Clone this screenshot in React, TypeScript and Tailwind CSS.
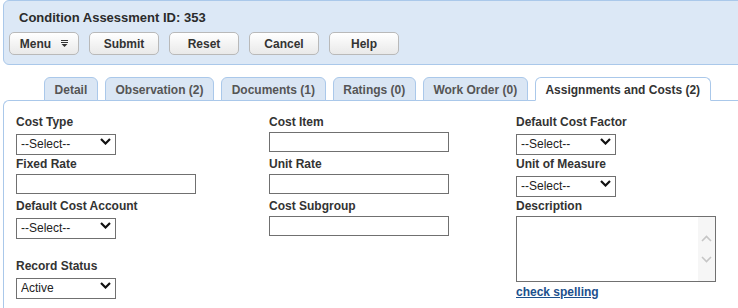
import React from 'react';

const font = "font-['Liberation_Sans',Arial,sans-serif]";

function Chevron() {
  return (
    <svg width="11" height="7" viewBox="0 0 11 7" className="pointer-events-none absolute right-[5px] top-[7px]">
      <path d="M1 1 L5.5 5.5 L10 1" fill="none" stroke="#111" strokeWidth="2.2" />
    </svg>
  );
}

function Select({ value = '--Select--' }: { value?: string }) {
  return (
    <div className="relative mt-[1px] h-[21px] w-[100px]">
      <select
        defaultValue={value}
        className={`${font} h-full w-full appearance-none border border-[#707070] bg-white pl-[4px] text-[12px] text-[#222] outline-none`}
      >
        <option>{value}</option>
      </select>
      <Chevron />
    </div>
  );
}

function TextInput({ w = 'w-[180px]' }: { w?: string }) {
  return <input type="text" className={`mt-[2px] block h-[20px] ${w} border border-[#707070] bg-white outline-none`} />;
}

function Label({ children }: { children: React.ReactNode }) {
  return <div className="h-[16px] text-[12px] font-bold leading-[16px] text-[#333]">{children}</div>;
}

function Field({ label, children, className = '' }: { label: string; children: React.ReactNode; className?: string }) {
  return (
    <div className={`mb-[4px] ${className}`}>
      <Label>{label}</Label>
      {children}
    </div>
  );
}

function MenuIcon() {
  return (
    <svg width="7" height="7" viewBox="0 0 7 7" className="ml-[10px]">
      <rect x="0" y="0" width="7" height="1" fill="#333" />
      <rect x="0" y="2" width="7" height="1" fill="#333" />
      <path d="M0.5 4 L6.5 4 L3.5 7 Z" fill="#333" />
    </svg>
  );
}

function Button({ children }: { children: React.ReactNode }) {
  return (
    <button className="flex h-[23px] w-[70px] items-center justify-center rounded-[5px] border border-[#b9b9b9] bg-gradient-to-b from-white to-[#e9e9e9] text-[12px] font-bold text-[#333]">
      {children}
    </button>
  );
}

const tabs = [
  { label: 'Detail' },
  { label: 'Observation (2)' },
  { label: 'Documents (1)' },
  { label: 'Ratings (0)' },
  { label: 'Work Order (0)' },
  { label: 'Assignments and Costs (2)', active: true },
];

export default function App() {
  return (
    <div className={`${font} h-[308px] w-[738px] overflow-hidden bg-white`}>
      <div className="w-[760px] pl-[3px]">
        {/* Header */}
        <div className="h-[65px] rounded-[6px] border border-[#aac8ea] bg-[#dce8f6] pl-[5px] pt-[9px]">
          <div className="pl-[10px] text-[13px] font-bold leading-[16px] text-[#2b2b2b]">Condition Assessment ID: 353</div>
          <div className="mt-[6px] flex gap-[10px]">
            <Button>
              Menu
              <MenuIcon />
            </Button>
            <Button>Submit</Button>
            <Button>Reset</Button>
            <Button>Cancel</Button>
            <Button>Help</Button>
          </div>
        </div>

        {/* Tabs */}
        <div className="relative z-10 -mb-px mt-[12px] flex gap-[7px] pl-[41px]">
          {tabs.map((t) => (
            <div
              key={t.label}
              className={
                t.active
                  ? 'flex h-[24px] items-center rounded-t-[6px] border border-[#aac8ea] border-b-white bg-white px-[9.6px] pt-[1px] text-[12px] font-bold text-[#333]'
                  : 'flex h-[24px] items-center rounded-t-[6px] border border-[#aac8ea] bg-[#dae6f4] px-[9.6px] pt-[1px] text-[12px] font-bold text-[#555]'
              }
            >
              {t.label}
            </div>
          ))}
        </div>

        {/* Content */}
        <div className="h-[260px] rounded-tl-[6px] border-l border-t border-[#aac8ea] pl-[12px] pt-[13px]">
          <div className="grid grid-cols-[253px_247px_1fr]">
            <div>
              <Field label="Cost Type">
                <Select />
              </Field>
              <Field label="Fixed Rate">
                <TextInput />
              </Field>
              <Field label="Default Cost Account">
                <Select />
              </Field>
              <Field label="Record Status" className="mt-[22px]">
                <Select value="Active" />
              </Field>
            </div>
            <div>
              <Field label="Cost Item">
                <TextInput />
              </Field>
              <Field label="Unit Rate">
                <TextInput />
              </Field>
              <Field label="Cost Subgroup">
                <TextInput />
              </Field>
            </div>
            <div>
              <Field label="Default Cost Factor">
                <Select />
              </Field>
              <Field label="Unit of Measure">
                <Select />
              </Field>
              <div>
                <Label>Description</Label>
                <div className="relative mt-[2px] h-[66px] w-[200px]">
                  <textarea className="block h-full w-full resize-none overflow-hidden border border-[#707070] bg-white outline-none" />
                  <div className="pointer-events-none absolute bottom-[1px] right-[1px] top-[1px] flex w-[17px] flex-col items-center justify-center gap-[14px] bg-[#f6f6f6]">
                    <svg width="11" height="7" viewBox="0 0 11 7">
                      <path d="M1 6 L5.5 1.5 L10 6" fill="none" stroke="#c6c6c6" strokeWidth="1.6" />
                    </svg>
                    <svg width="11" height="7" viewBox="0 0 11 7">
                      <path d="M1 1 L5.5 5.5 L10 1" fill="none" stroke="#c6c6c6" strokeWidth="1.6" />
                    </svg>
                  </div>
                </div>
                <a href="#" className="mt-[2px] block w-fit text-[12px] font-bold leading-[16px] text-[#1c4f8c] underline">
                  check spelling
                </a>
              </div>
            </div>
          </div>
        </div>
      </div>
    </div>
  );
}
